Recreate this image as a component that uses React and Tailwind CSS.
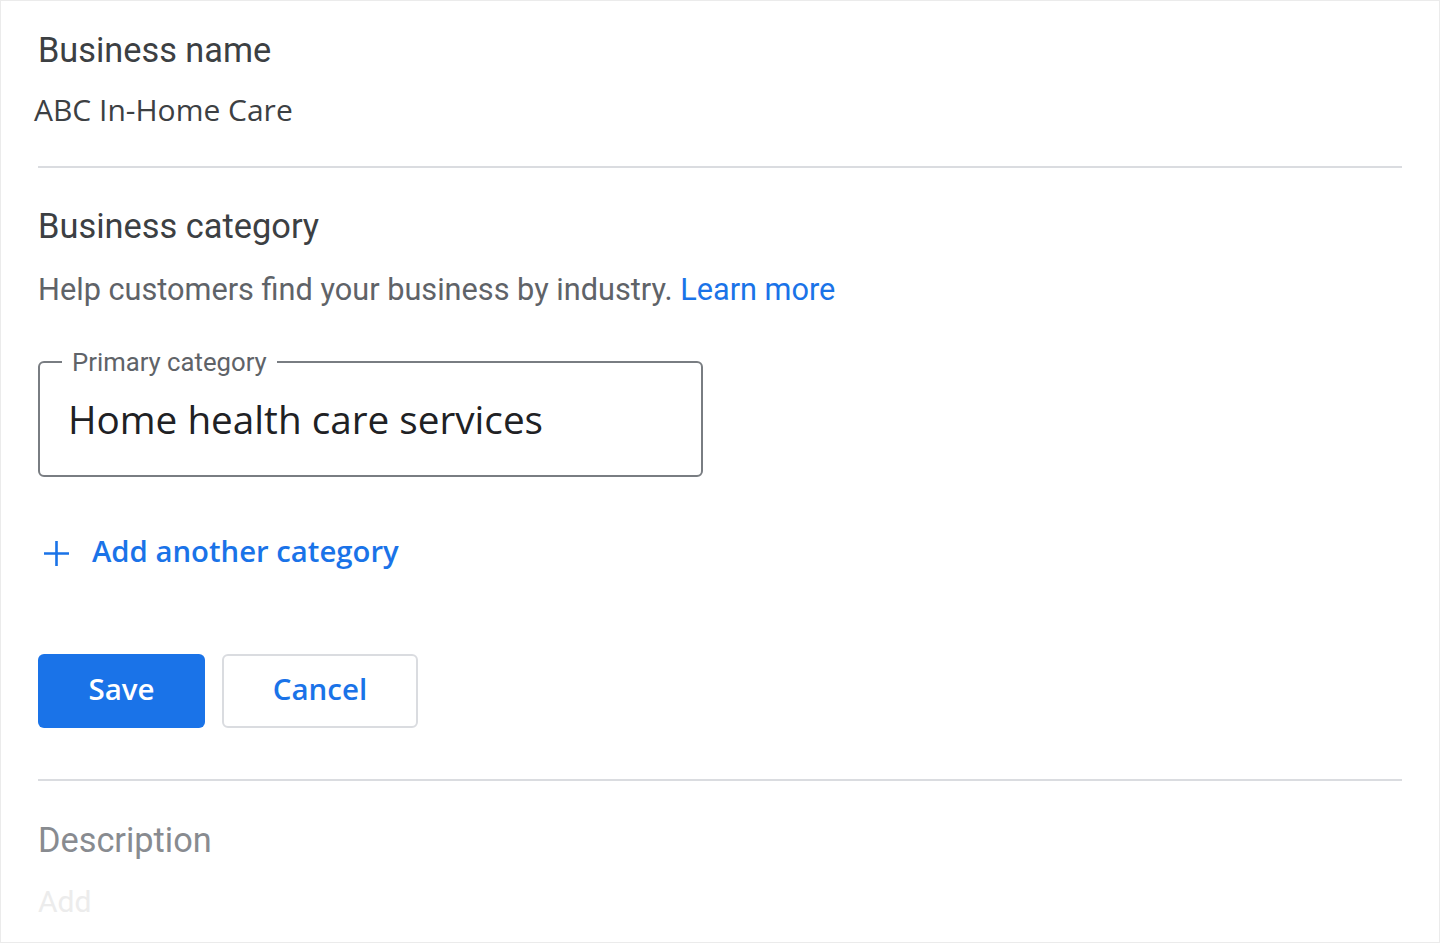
import React from "react";

const PlusIcon = () => (
  <svg width="27" height="27" viewBox="0 0 27 27" fill="none">
    <path d="M13.5 1v25M1 13.5h25" stroke="#1a73e8" strokeWidth="2.6" />
  </svg>
);

export default function App() {
  return (
    <div className="h-[943px] w-full overflow-hidden border border-[#ebebeb] bg-white font-['Roboto',sans-serif]">
      <div className="pl-[37px] pr-[37px] pt-[29px]">
        {/* Business name */}
        <h2 className="text-[34.3px] leading-[40px] text-[#3c4043]">Business name</h2>
        <p className="-ml-[4px] mt-[20px] font-['Open_Sans',sans-serif] text-[30px] leading-[40px] text-[#3c4043]">
          ABC In-Home Care
        </p>
        <div className="mt-[36px] h-[2px] bg-[#dadce0]" />

        {/* Business category */}
        <h2 className="mt-[38px] text-[34.4px] leading-[40px] text-[#3c4043]">Business category</h2>
        <p className="mt-[26px] text-[30.7px] leading-[36px] text-[#5f6368]">
          Help customers find your business by industry.{" "}
          <a className="text-[#1a73e8]">Learn more</a>
        </p>

        <fieldset className="mt-[40px] w-[665px] rounded-[6px] border-2 border-[#797d82]">
          <legend className="ml-[22px] px-[10px] text-[25.7px] leading-[28px] text-[#5f6368]">
            Primary category
          </legend>
          <div className="pb-[30px] pl-[28px] pt-[17px] font-['Open_Sans',sans-serif] text-[38.7px] leading-[52px] text-[#202124]">
            Home health care services
          </div>
        </fieldset>

        <button className="mt-[56px] flex h-[40px] items-center gap-[22px] pl-[5px] font-['Open_Sans',sans-serif] text-[29.3px] font-semibold text-[#1a73e8]">
          <PlusIcon />
          <span className="pb-[3px]">Add another category</span>
        </button>

        <div className="mt-[81px] flex gap-[17px]">
          <button className="h-[74px] w-[167px] rounded-[6px] bg-[#1a73e8] pb-[3px] font-['Open_Sans',sans-serif] text-[29.5px] font-semibold text-white">
            Save
          </button>
          <button className="h-[74px] w-[196px] rounded-[6px] border-2 border-[#dadce0] bg-white pb-[3px] font-['Open_Sans',sans-serif] text-[29.5px] font-semibold text-[#1a73e8]">
            Cancel
          </button>
        </div>

        <div className="mt-[51px] h-[2px] bg-[#dadce0]" />

        {/* Description */}
        <h2 className="mt-[39px] text-[34.3px] leading-[40px] text-[#888b90]">Description</h2>
        <p className="mt-[24px] text-[30px] leading-[36px] text-[#ececec]">Add</p>
      </div>
    </div>
  );
}
